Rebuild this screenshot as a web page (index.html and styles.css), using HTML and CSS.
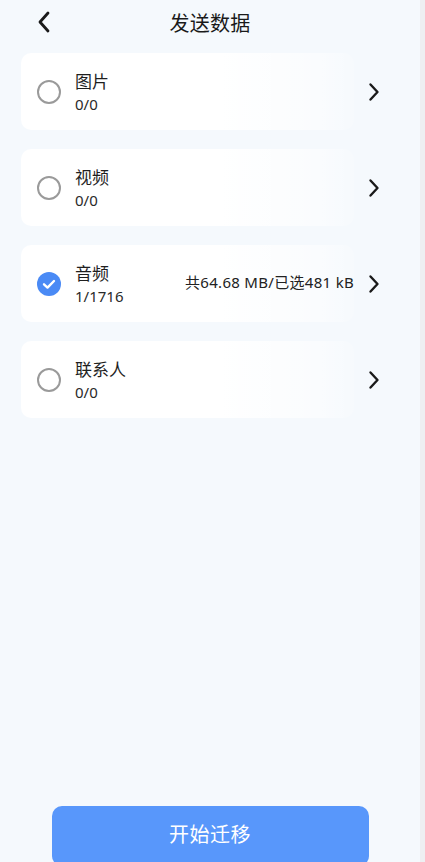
FILE: index.html
```html
<!DOCTYPE html>
<html lang="zh">
<head>
<meta charset="utf-8">
<link rel="stylesheet" href="styles.css">
</head>
<body>
<div class="page">
  <header class="topbar">
    <svg class="back" width="16" height="24" viewBox="0 0 16 24"><path d="M12 3 L4 12 L12 21" fill="none" stroke="#1a1a1a" stroke-width="2.8" stroke-linecap="round" stroke-linejoin="round"/></svg>
    <h1 class="title">发送数据</h1>
  </header>
  <main class="list">
    <div class="card">
      <span class="radio"></span>
      <div class="info"><div class="name">图片</div><div class="count">0/0</div></div>
      <span class="size"></span>
      <svg class="chev" width="12" height="20" viewBox="0 0 12 20"><path d="M2.5 2.5 L9.5 10 L2.5 17.5" fill="none" stroke="#1a1a1a" stroke-width="2.4" stroke-linecap="round" stroke-linejoin="round"/></svg>
    </div>
    <div class="card">
      <span class="radio"></span>
      <div class="info"><div class="name">视频</div><div class="count">0/0</div></div>
      <span class="size"></span>
      <svg class="chev" width="12" height="20" viewBox="0 0 12 20"><path d="M2.5 2.5 L9.5 10 L2.5 17.5" fill="none" stroke="#1a1a1a" stroke-width="2.4" stroke-linecap="round" stroke-linejoin="round"/></svg>
    </div>
    <div class="card">
      <span class="radio checked"><svg width="24" height="24" viewBox="0 0 24 24"><path d="M7 12.3 L10.5 15.6 L17 9" fill="none" stroke="#fff" stroke-width="2.4" stroke-linecap="round" stroke-linejoin="round"/></svg></span>
      <div class="info"><div class="name">音频</div><div class="count">1/1716</div></div>
      <span class="size">共64.68 MB/已选481 kB</span>
      <svg class="chev" width="12" height="20" viewBox="0 0 12 20"><path d="M2.5 2.5 L9.5 10 L2.5 17.5" fill="none" stroke="#1a1a1a" stroke-width="2.4" stroke-linecap="round" stroke-linejoin="round"/></svg>
    </div>
    <div class="card">
      <span class="radio"></span>
      <div class="info"><div class="name">联系人</div><div class="count">0/0</div></div>
      <span class="size"></span>
      <svg class="chev" width="12" height="20" viewBox="0 0 12 20"><path d="M2.5 2.5 L9.5 10 L2.5 17.5" fill="none" stroke="#1a1a1a" stroke-width="2.4" stroke-linecap="round" stroke-linejoin="round"/></svg>
    </div>
  </main>
  <div class="footer">
    <button class="start">开始迁移</button>
  </div>
</div>
</body>
</html>
```
FILE: styles.css
```css
html, body {
  margin: 0;
  padding: 0;
  height: 100%;
  overflow: hidden;
}
body {
  background: #eeeff2;
  font-family: "Noto Sans CJK SC", "Noto Sans", sans-serif;
  color: #222;
}
.page {
  width: 420px;
  height: 862px;
  background: #f5f9fd;
  display: flex;
  flex-direction: column;
}
.topbar {
  height: 44px;
  display: flex;
  align-items: center;
  position: relative;
  justify-content: center;
}
.back {
  position: absolute;
  left: 36px;
  top: 10px;
}
.title {
  margin: 0;
  font-size: 20px;
  font-weight: 400;
  color: #1a1a1a;
  letter-spacing: 0.3px;
}
.list {
  padding: 9px 0 0 21px;
  display: flex;
  flex-direction: column;
  gap: 19px;
}
.card {
  height: 77px;
  width: 333px;
  border-radius: 10px;
  background: linear-gradient(to right, #ffffff 0%, #ffffff 60%, rgba(255,255,255,0.5) 90%, rgba(255,255,255,0.15) 100%);
  display: flex;
  align-items: center;
  padding-left: 16px;
  box-sizing: border-box;
}
.radio {
  width: 24px;
  height: 24px;
  border: 2px solid #9a9a9a;
  border-radius: 50%;
  box-sizing: border-box;
  flex: none;
  display: flex;
  align-items: center;
  justify-content: center;
}
.radio.checked {
  border: none;
  background: #4a8af5;
}
.info {
  margin-left: 14px;
  flex: 1;
  display: flex;
  flex-direction: column;
  margin-top: 0;
}
.name {
  font-size: 17px;
  line-height: 22px;
  color: #1f1f1f;
}
.count {
  font-size: 15px;
  line-height: 20px;
  margin-top: 2px;
  color: #2a2a2a;
  font-family: "Noto Sans", sans-serif;
}
.size {
  font-size: 15px;
  color: #222;
  margin-right: 0;
  margin-top: -4px;
  white-space: nowrap;
  letter-spacing: 0.3px;
  font-family: "Noto Sans", "Noto Sans CJK SC", sans-serif;
}
.chev {
  flex: none;
  margin-left: 14px;
  margin-right: -26px;
}
.size:empty + .chev {
  margin-left: 0;
}
.footer {
  margin-top: auto;
  display: flex;
  justify-content: center;
  padding-left: 2px;
  padding-right: 2px;
}
.start {
  width: 317px;
  height: 60px;
  margin-bottom: -4px;
  border: none;
  border-radius: 10px;
  background: #5897fb;
  color: #fff;
  font-family: "Noto Sans CJK SC", sans-serif;
  font-size: 20px;
  padding-bottom: 6px;
  letter-spacing: 0.5px;
}
```
